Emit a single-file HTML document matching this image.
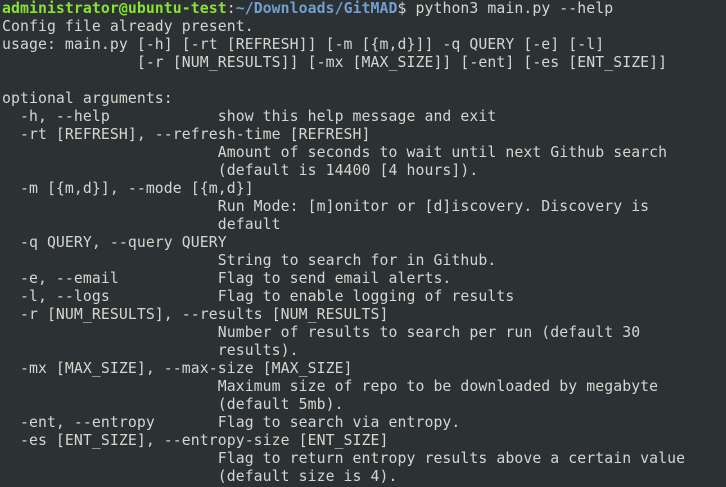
<!DOCTYPE html>
<html><head><meta charset="utf-8"><style>
html,body{margin:0;padding:0;background:#2c3134;width:726px;height:487px;overflow:hidden}
pre{margin:0;padding:0 0 0 2px;position:absolute;top:0;left:0;font-family:"DejaVu Sans Mono","Liberation Mono",monospace;font-size:14.8px;letter-spacing:0.08px;line-height:18px;color:#d3d7cf;white-space:pre}
.g{color:#8ae234;font-weight:bold}.b{color:#729fcf;font-weight:bold}
</style></head><body><pre><span class="g">administrator@ubuntu-test</span>:<span class="b">~/Downloads/GitMAD</span>$ python3 main.py --help
Config file already present.
usage: main.py [-h] [-rt [REFRESH]] [-m [{m,d}]] -q QUERY [-e] [-l]
               [-r [NUM_RESULTS]] [-mx [MAX_SIZE]] [-ent] [-es [ENT_SIZE]]

optional arguments:
  -h, --help            show this help message and exit
  -rt [REFRESH], --refresh-time [REFRESH]
                        Amount of seconds to wait until next Github search
                        (default is 14400 [4 hours]).
  -m [{m,d}], --mode [{m,d}]
                        Run Mode: [m]onitor or [d]iscovery. Discovery is
                        default
  -q QUERY, --query QUERY
                        String to search for in Github.
  -e, --email           Flag to send email alerts.
  -l, --logs            Flag to enable logging of results
  -r [NUM_RESULTS], --results [NUM_RESULTS]
                        Number of results to search per run (default 30
                        results).
  -mx [MAX_SIZE], --max-size [MAX_SIZE]
                        Maximum size of repo to be downloaded by megabyte
                        (default 5mb).
  -ent, --entropy       Flag to search via entropy.
  -es [ENT_SIZE], --entropy-size [ENT_SIZE]
                        Flag to return entropy results above a certain value
                        (default size is 4).
</pre></body></html>
